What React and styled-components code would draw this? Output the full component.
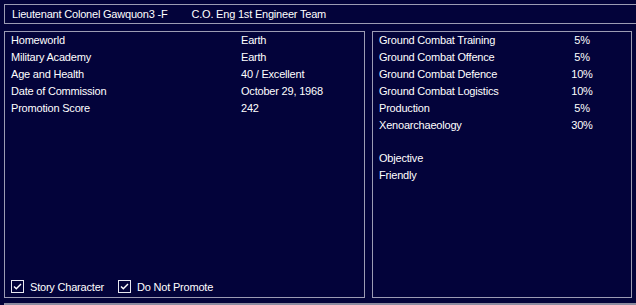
import styled, { createGlobalStyle } from 'styled-components'

const GlobalStyle = createGlobalStyle`
  html, body {
    margin: 0;
    padding: 0;
    background: #03033a;
    overflow: hidden;
  }
  body {
    font-family: "Liberation Sans", Arial, sans-serif;
    font-size: 11px;
    letter-spacing: -0.2px;
    color: #ffffff;
  }
`

const line = '#9c9cb4'

const Page = styled.div`
  width: 636px;
  height: 305px;
  padding: 4px 0 0 4px;
  box-sizing: border-box;
  display: flex;
  flex-direction: column;
  background: #03033a;
`

const TopBar = styled.div`
  height: 18px;
  border: 1px solid ${line};
  border-right: none;
  display: flex;
  align-items: center;
  padding-left: 7px;
  gap: 24px;
  white-space: nowrap;
`

const Panels = styled.div`
  margin-top: 7px;
  width: 628px;
  height: 267px;
  display: flex;
  gap: 7px;
`

const Panel = styled.div`
  width: ${p => p.$w}px;
  box-sizing: border-box;
  border: 1px solid ${line};
  padding: 0 6px;
  display: flex;
  flex-direction: column;
`

const Grid = styled.div`
  display: grid;
  grid-template-columns: ${p => p.$cols};
  grid-auto-rows: 17px;
  align-items: center;
  white-space: nowrap;
  margin-top: -1px;
`

const Value = styled.span`
  text-align: ${p => (p.$center ? 'center' : 'left')};
`

const Spacer = styled.div`
  height: 17px;
`

const Checks = styled.div`
  margin-top: auto;
  margin-bottom: 4px;
  display: flex;
  align-items: center;
  gap: 14px;
`

const CheckItem = styled.label`
  display: flex;
  align-items: center;
  gap: 6px;
`

const Box = styled.svg`
  width: 13px;
  height: 13px;
  display: block;
`

const Footer = styled.div`
  margin-top: 5px;
  flex: 1;
  border-top: 2px solid #8c8ca0;
  border-left: 1px solid ${line};
`

function Check({ label }) {
  return (
    <CheckItem>
      <Box viewBox="0 0 13 13">
        <rect x="0.5" y="0.5" width="12" height="12" fill="#03033a" stroke="#e8e8f0" strokeWidth="1" />
        <path d="M3 6.5 L5.3 8.8 L10 4" fill="none" stroke="#ffffff" strokeWidth="1.4" />
      </Box>
      <span>{label}</span>
    </CheckItem>
  )
}

const details = [
  ['Homeworld', 'Earth'],
  ['Military Academy', 'Earth'],
  ['Age and Health', '40 / Excellent'],
  ['Date of Commission', 'October 29, 1968'],
  ['Promotion Score', '242'],
]

const skills = [
  ['Ground Combat Training', '5%'],
  ['Ground Combat Offence', '5%'],
  ['Ground Combat Defence', '10%'],
  ['Ground Combat Logistics', '10%'],
  ['Production', '5%'],
  ['Xenoarchaeology', '30%'],
]

export default function App() {
  return (
    <>
      <GlobalStyle />
      <Page>
        <TopBar>
          <span>Lieutenant Colonel Gawquon3 -F</span>
          <span>C.O. Eng 1st Engineer Team</span>
        </TopBar>
        <Panels>
          <Panel $w={361}>
            <Grid $cols="230px 1fr">
              {details.flatMap(([k, v]) => [
                <span key={k}>{k}</span>,
                <Value key={k + 'v'}>{v}</Value>,
              ])}
            </Grid>
            <Checks>
              <Check label="Story Character" />
              <Check label="Do Not Promote" />
            </Checks>
          </Panel>
          <Panel $w={260}>
            <Grid $cols="173px 60px">
              {skills.flatMap(([k, v]) => [
                <span key={k}>{k}</span>,
                <Value key={k + 'v'} $center>{v}</Value>,
              ])}
            </Grid>
            <Spacer />
            <Grid $cols="1fr">
              <span>Objective</span>
              <span>Friendly</span>
            </Grid>
          </Panel>
        </Panels>
        <Footer />
      </Page>
    </>
  )
}
